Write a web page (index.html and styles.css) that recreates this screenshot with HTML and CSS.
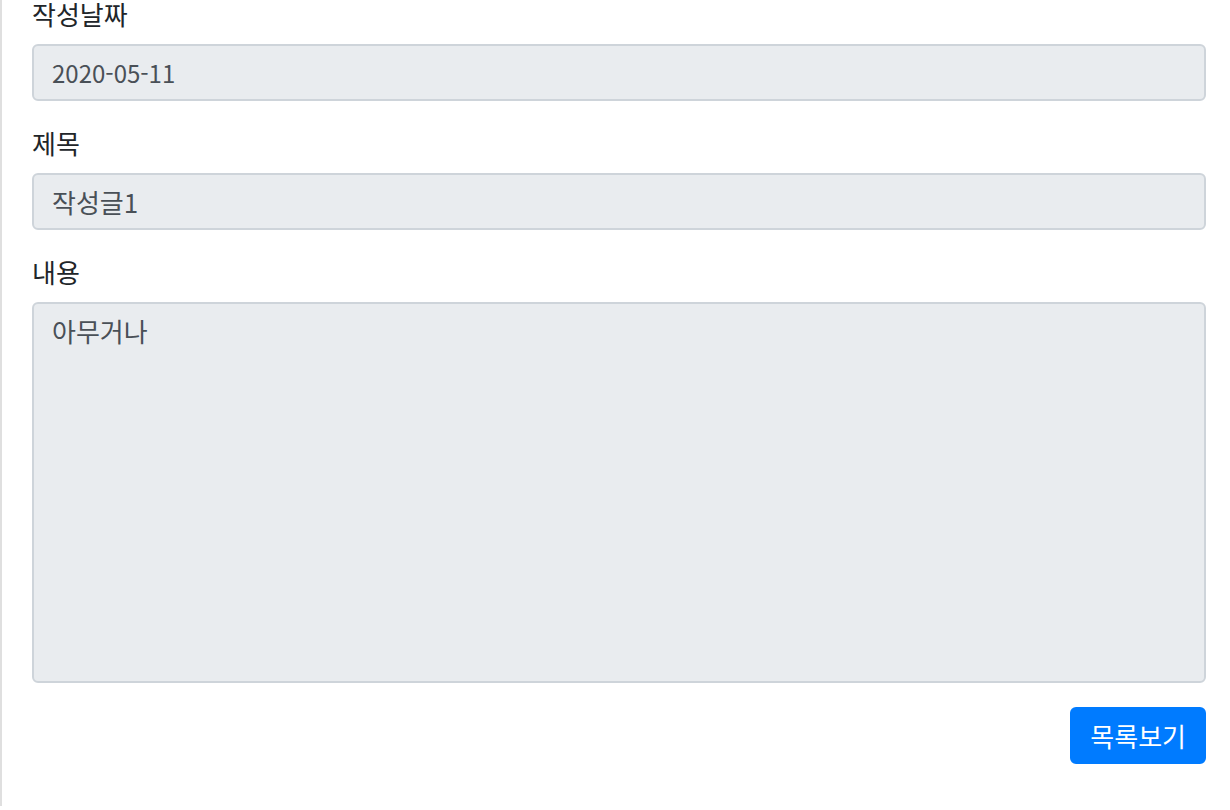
FILE: index.html
```html
<!DOCTYPE html>
<html lang="ko">
<head>
<meta charset="utf-8">
<title>글 보기</title>
<link rel="stylesheet" href="styles.css">
</head>
<body>
<div class="page">
  <form class="post-form">
    <div class="form-group">
      <label class="form-label" for="date">작성날짜</label>
      <input class="form-control form-date" id="date" type="text" value="2020-05-11" readonly>
    </div>
    <div class="form-group">
      <label class="form-label" for="title">제목</label>
      <input class="form-control" id="title" type="text" value="작성글1" readonly>
    </div>
    <div class="form-group">
      <label class="form-label" for="content">내용</label>
      <textarea class="form-control form-textarea" id="content" rows="10" readonly>아무거나</textarea>
    </div>
    <div class="actions">
      <button type="button" class="btn-primary">목록보기</button>
    </div>
  </form>
</div>
</body>
</html>
```

FILE: styles.css
```css
html, body {
  margin: 0;
  padding: 0;
  background: #ffffff;
}

body {
  font-family: "Noto Sans CJK KR", "Noto Sans", sans-serif;
  font-size: 26px;
  line-height: 1.5;
  color: #212529;
  overflow: hidden;
}

.page {
  border-left: 2px solid #dfdfdf;
  padding: 0 24px 0 30px;
  min-height: 810px;
  box-sizing: border-box;
}

.post-form {
  margin-top: -4px;
}

.form-group {
  margin-bottom: 24px;
}

.form-label {
  display: block;
  margin-bottom: 12px;
  font-size: 26px;
  line-height: 36px;
}

.form-control {
  display: block;
  width: 100%;
  box-sizing: border-box;
  height: 57px;
  padding: 9px 18px;
  font-family: inherit;
  font-size: 26px;
  line-height: 36px;
  color: #495057;
  background: #e9ecef;
  border: 2px solid #ced4da;
  border-radius: 6px;
  outline: none;
  margin: 0;
}

.form-date {
  font-size: 24px;
}

.form-textarea {
  height: 381px;
  resize: none;
  overflow: hidden;
}

.actions {
  display: flex;
  justify-content: flex-end;
}

.btn-primary {
  font-family: inherit;
  font-size: 26px;
  line-height: 36px;
  height: 57px;
  padding: 9px 18px;
  color: #ffffff;
  background: #007bff;
  border: 2px solid #007bff;
  border-radius: 6px;
  cursor: pointer;
}
```
